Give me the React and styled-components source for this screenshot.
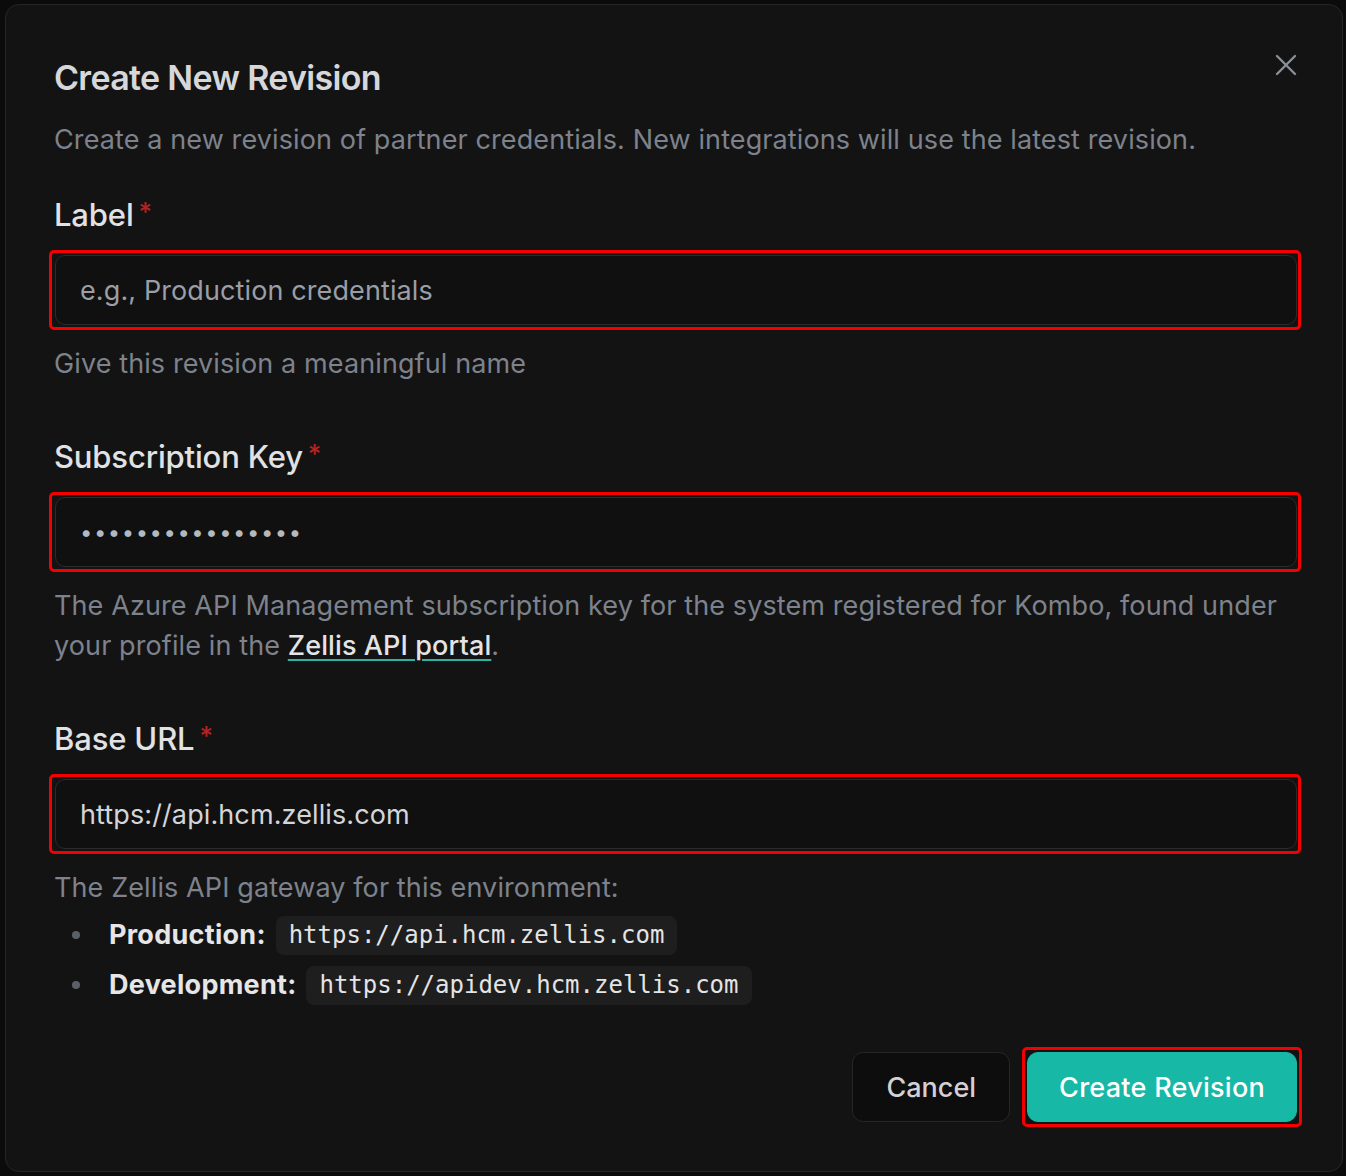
import styled, { createGlobalStyle } from 'styled-components';

const GlobalStyle = createGlobalStyle`
  html, body {
    margin: 0;
    padding: 0;
    background: #0b0b0c;
  }
  body {
    font-family: Inter, "Noto Sans", sans-serif;
    -webkit-font-smoothing: antialiased;
  }
`

const Backdrop = styled.div`
  width: 1346px;
  height: 1176px;
  box-sizing: border-box;
  padding: 4px 3px 4px 5px;
  background: #0b0b0c;
`

const Dialog = styled.div`
  position: relative;
  box-sizing: border-box;
  height: 100%;
  background: #131313;
  border: 1px solid #262626;
  border-radius: 14px;
  padding: 53px 45px 44px 48px;
  display: flex;
  flex-direction: column;
`

const CloseButton = styled.button`
  position: absolute;
  top: 44px;
  right: 40px;
  width: 32px;
  height: 32px;
  padding: 0;
  border: none;
  background: transparent;
  display: flex;
  align-items: center;
  justify-content: center;
  cursor: pointer;
`

const Title = styled.h2`
  margin: 0;
  font-size: 34px;
  line-height: 40px;
  font-weight: 600;
  letter-spacing: -0.02em;
  color: #d6d7da;
`

const Description = styled.p`
  margin: 22px 0 0;
  font-size: 27px;
  line-height: 40px;
  letter-spacing: 0.004em;
  color: #7d828c;
`

const Form = styled.div`
  margin-top: 35px;
  display: flex;
  flex-direction: column;
  gap: 53px;
`

const Field = styled.div`
  display: flex;
  flex-direction: column;
`

const Label = styled.label`
  font-size: 31px;
  line-height: 40px;
  font-weight: 500;
  letter-spacing: -0.005em;
  color: #e1e2e4;
`

const Required = styled.span`
  margin-left: 5px;
  color: #b42323;
  font-size: 26px;
  vertical-align: top;
  line-height: 34px;
`

/* red ring around each input */
const Ring = styled.div`
  margin: 15px -4px 0 -5px;
  padding: 2px 1px 2px 3px;
  border: 3px solid #f40000;
  border-radius: 5px;
`

const Input = styled.input`
  box-sizing: border-box;
  width: 100%;
  height: 70px;
  padding: 0 24px;
  background: #101010;
  border: 1px solid #2b2b2b;
  border-radius: 10px;
  font-family: Inter, "Noto Sans", sans-serif;
  font-size: ${p => (p.type === 'password' ? '22px' : '27px')};
  letter-spacing: ${p => (p.type === 'password' ? '0.07em' : '0.004em')};
  color: ${p => (p.type === 'password' ? '#b5b8bf' : '#d4d5d8')};
  outline: none;

  &::placeholder {
    color: #9a9ea7;
  }
`

const Help = styled.div`
  margin-top: 14px;
  font-size: 27px;
  line-height: 40px;
  letter-spacing: 0.004em;
  color: #7d828c;
`

const Link = styled.a`
  color: #e4e4e6;
  font-weight: 500;
  text-decoration: underline;
  text-decoration-color: #2bb3a3;
  text-decoration-thickness: 2px;
  text-underline-offset: 4px;
`

const List = styled.ul`
  margin: 2px 0 0;
  padding: 0;
  list-style: none;
`

const Item = styled.li`
  height: 50px;
  display: flex;
  align-items: center;
  padding-left: 18px;

  &::before {
    content: '';
    width: 8px;
    height: 8px;
    border-radius: 50%;
    background: #5b5f67;
    margin-right: 29px;
  }
`

const ItemLabel = styled.strong`
  font-weight: 700;
  letter-spacing: 0.01em;
  color: #e6e6e8;
  margin-right: 10px;
`

const Code = styled.code`
  display: inline-block;
  height: 39px;
  line-height: 39px;
  padding: 0 13px;
  background: #1e1e1e;
  border-radius: 8px;
  font-family: "DejaVu Sans Mono", "Liberation Mono", monospace;
  font-size: 24px;
  letter-spacing: 0;
  color: #e4e4e6;
`

const Footer = styled.div`
  margin-top: auto;
  display: flex;
  justify-content: flex-end;
  align-items: center;
  gap: 12px;
  margin-right: -5px;
`

const Button = styled.button`
  height: 70px;
  padding: 0 ${p => (p.$primary ? '31px' : '33px')};
  border-radius: 11px;
  font-family: Inter, "Noto Sans", sans-serif;
  font-size: 27px;
  font-weight: 500;
  letter-spacing: ${p => (p.$primary ? '0.01em' : '0')};
  cursor: pointer;
  border: 1px solid ${p => (p.$primary ? '#17b8a6' : '#262626')};
  background: ${p => (p.$primary ? '#17b8a6' : '#0d0d0d')};
  color: ${p => (p.$primary ? '#ffffff' : '#d2d2d4')};
`

const ButtonRing = styled.div`
  padding: 2px;
  border: 3px solid #f40000;
  border-radius: 5px;
  display: flex;
`

const CloseIcon = () => (
  <svg width="22" height="22" viewBox="0 0 22 22" fill="none">
    <path d="M2 2 L20 20 M20 2 L2 20" stroke="#8a8f98" strokeWidth="2.4" strokeLinecap="round" />
  </svg>
)

const App = () => {
  return (
    <Backdrop>
      <GlobalStyle />
      <Dialog>
        <CloseButton aria-label="Close">
          <CloseIcon />
        </CloseButton>
        <Title>Create New Revision</Title>
        <Description>
          Create a new revision of partner credentials. New integrations will use the latest revision.
        </Description>

        <Form>
          <Field>
            <Label>Label<Required>*</Required></Label>
            <Ring>
              <Input placeholder="e.g., Production credentials" />
            </Ring>
            <Help>Give this revision a meaningful name</Help>
          </Field>

          <Field>
            <Label>Subscription Key<Required>*</Required></Label>
            <Ring>
              <Input type="password" defaultValue="abcdefghijklmnop" />
            </Ring>
            <Help>
              The Azure API Management subscription key for the system registered for Kombo, found under
              your profile in the <Link href="#">Zellis API portal</Link>.
            </Help>
          </Field>

          <Field>
            <Label>Base URL<Required>*</Required></Label>
            <Ring>
              <Input defaultValue="https://api.hcm.zellis.com" />
            </Ring>
            <Help>
              The Zellis API gateway for this environment:
              <List>
                <Item>
                  <ItemLabel>Production:</ItemLabel>
                  <Code>https://api.hcm.zellis.com</Code>
                </Item>
                <Item>
                  <ItemLabel>Development:</ItemLabel>
                  <Code>https://apidev.hcm.zellis.com</Code>
                </Item>
              </List>
            </Help>
          </Field>
        </Form>

        <Footer>
          <Button>Cancel</Button>
          <ButtonRing>
            <Button $primary>Create Revision</Button>
          </ButtonRing>
        </Footer>
      </Dialog>
    </Backdrop>
  )
}

export default App
